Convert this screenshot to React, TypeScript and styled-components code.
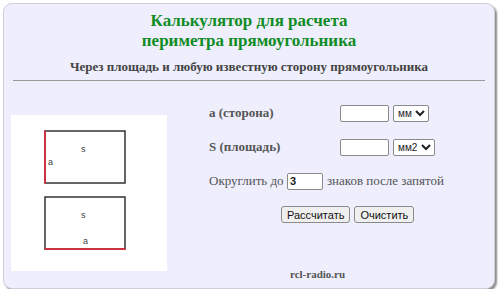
import { createGlobalStyle, styled } from 'styled-components'

const Global = createGlobalStyle`
  html, body {
    margin: 0;
    padding: 0;
    background: #ffffff;
  }
`

const Panel = styled.div`
  box-sizing: border-box;
  margin: 3px 0 0 3px;
  width: 492px;
  height: 286px;
  padding: 0 9px;
  background: #eeeefd;
  border: 1px solid #cfcfdc;
  border-radius: 9px;
  box-shadow: 2px 2px 2px #8c8c8c;
  font-family: 'Liberation Serif', serif;
  color: #555;
`

const Title = styled.h1`
  margin: 0;
  padding-top: 7px;
  text-align: center;
  font-size: 17px;
  line-height: 20px;
  font-weight: bold;
  color: #108c24;
`

const Subtitle = styled.h2`
  margin: 8px 0 0;
  text-align: center;
  font-size: 13px;
  line-height: 16px;
  font-weight: bold;
  color: #444;
`

const Rule = styled.hr`
  margin: 5px 0 0;
  border: none;
  border-top: 1px solid #999;
`

const Body = styled.div`
  display: flex;
  align-items: flex-start;
  gap: 42px;
`

const Picture = styled.div`
  margin: 34px 0 0 -2px;
  width: 156px;
  height: 156px;
  background: #fff;
  display: flex;
  flex-direction: column;
  align-items: flex-start;
  gap: 12px;
  padding: 15px 0 0 33px;
  box-sizing: border-box;
`

const Form = styled.div`
  margin-top: 23px;
  display: flex;
  flex-direction: column;
`

const Row = styled.div`
  display: flex;
  align-items: center;
  height: 18px;
  margin-bottom: 16px;
`

const Label = styled.span<{ $bold?: boolean }>`
  width: 131px;
  font-size: 13px;
  font-weight: ${(p) => (p.$bold ? 'bold' : 'normal')};
`

const Text = styled.span`
  font-size: 13px;
`

const Field = styled.input<{ $w: number }>`
  box-sizing: border-box;
  width: ${(p) => p.$w}px;
  height: 17px;
  padding: 0 2px;
  margin: 0 4px 0 0;
  border: 1px solid #8a8a8a;
  border-radius: 2px;
  background: #fff;
  font-family: 'Liberation Sans', sans-serif;
  font-size: 11px;
  font-weight: bold;
  color: #222;
`

const Unit = styled.select`
  height: 17px;
  margin: 0;
  padding: 0;
  font-family: 'Liberation Sans', sans-serif;
  font-size: 10px;
  color: #222;
  border: 1px solid #8a8a8a;
  border-radius: 2px;
  background: #fff;
`

const Buttons = styled.div`
  display: flex;
  gap: 4px;
  padding-left: 72px;
`

const Btn = styled.button`
  height: 17px;
  padding: 0 5px;
  font-family: 'Liberation Sans', sans-serif;
  font-size: 11px;
  color: #111;
  background: #efefef;
  border: 1px solid #8a8a8a;
  border-radius: 3px;
`

const Footer = styled.div`
  margin-top: 45px;
  padding-left: 81px;
  font-size: 11px;
  line-height: 12px;
  font-weight: bold;
  color: #555;
`

const Rect = ({ side }: { side: 'left' | 'bottom' }) => (
  <svg width="82" height="54" viewBox="0 0 82 54">
    <rect x="1" y="1" width="80" height="52" fill="#fff" stroke="#333" strokeWidth="1.5" />
    {side === 'left' ? (
      <line x1="1" y1="0.5" x2="1" y2="53.5" stroke="#f02436" strokeWidth="1.5" />
    ) : (
      <line x1="0.5" y1="53" x2="81.5" y2="53" stroke="#f02436" strokeWidth="1.5" />
    )}
    <text x="37" y="22" fontFamily="Liberation Sans, sans-serif" fontSize="9" fill="#444">
      s
    </text>
    {side === 'left' ? (
      <text x="4" y="35" fontFamily="Liberation Sans, sans-serif" fontSize="9" fill="#444">
        a
      </text>
    ) : (
      <text x="39" y="48" fontFamily="Liberation Sans, sans-serif" fontSize="9" fill="#444">
        a
      </text>
    )}
  </svg>
)

export default function App() {
  return (
    <>
      <Global />
      <Panel>
        <Title>
          Калькулятор для расчета
          <br />
          периметра прямоугольника
        </Title>
        <Subtitle>Через площадь и любую известную сторону прямоугольника</Subtitle>
        <Rule />
        <Body>
          <Picture>
            <Rect side="left" />
            <Rect side="bottom" />
          </Picture>
          <Form>
            <Row>
              <Label $bold>a (сторона)</Label>
              <Field $w={49} />
              <Unit defaultValue="мм">
                <option>мм</option>
                <option>см</option>
                <option>м</option>
              </Unit>
            </Row>
            <Row>
              <Label $bold>S (площадь)</Label>
              <Field $w={49} />
              <Unit defaultValue="мм2">
                <option>мм2</option>
                <option>см2</option>
                <option>м2</option>
              </Unit>
            </Row>
            <Row>
              <Text>Округлить до&nbsp;</Text>
              <Field $w={36} defaultValue="3" />
              <Text>знаков после запятой</Text>
            </Row>
            <Buttons>
              <Btn>Рассчитать</Btn>
              <Btn>Очистить</Btn>
            </Buttons>
            <Footer>rcl-radio.ru</Footer>
          </Form>
        </Body>
      </Panel>
    </>
  )
}
